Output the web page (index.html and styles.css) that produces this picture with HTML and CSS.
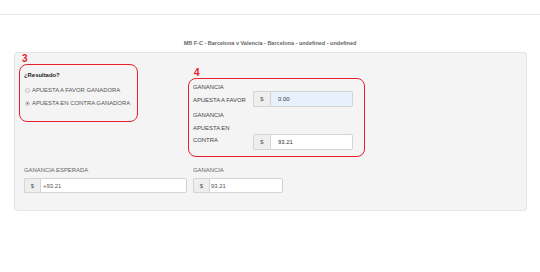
FILE: index.html
```html
<!DOCTYPE html>
<html lang="es">
<head>
    <meta charset="UTF-8">
    <meta name="viewport" content="width=device-width, initial-scale=1.0">
    <title>Apuesta</title>
    <link rel="stylesheet" href="styles.css">
</head>
<body>

    <header class="topbar"></header>

    <h2 class="title">MB F-C - Barcelona v Valencia - Barcelona - undefined - undefined</h2>

    <section class="panel">
        <div class="row-top">
            <div class="col-left">
                <div class="tag">3</div>
                <div class="box box-result">
                    <p class="question">¿Resultado?</p>
                    <label class="radio"><input type="radio" name="res"> APUESTA A FAVOR GANADORA</label>
                    <label class="radio"><input type="radio" name="res" checked> APUESTA EN CONTRA GANADORA</label>
                </div>
            </div>
            <div class="col-right">
                <div class="tag tag-4">4</div>
                <div class="box box-gain">
                    <div class="gain-row">
                        <span class="gain-label">GANANCIA<br>APUESTA A FAVOR</span>
                        <div class="group group-box">
                            <span class="addon">$</span>
                            <input class="field field-fill" type="text" value="0.00">
                        </div>
                    </div>
                    <div class="gain-row gain-row-2">
                        <span class="gain-label">GANANCIA<br>APUESTA EN<br>CONTRA</span>
                        <div class="group group-box">
                            <span class="addon">$</span>
                            <input class="field" type="text" value="93.21">
                        </div>
                    </div>
                </div>
            </div>
        </div>

        <div class="row-bottom">
            <div class="summary summary-left">
                <div class="sum-label">GANANCIA ESPERADA</div>
                <div class="group group-sum">
                    <span class="addon">$</span>
                    <input class="field field-sum" type="text" value="+93.21">
                </div>
            </div>
            <div class="summary summary-right">
                <div class="sum-label">GANANCIA</div>
                <div class="group group-sum">
                    <span class="addon">$</span>
                    <input class="field field-sum field-tight" type="text" value="93.21">
                </div>
            </div>
        </div>
    </section>

</body>
</html>
```

FILE: styles.css
```css
body {
    font-family: "Liberation Sans", Arial, sans-serif;
    margin: 0;
    padding: 0;
    background-color: #fff;
    color: #444;
}

.topbar {
    height: 14px;
    border-bottom: 1px solid #e8e8e8;
}

.title {
    margin: 24px 0 0 0;
    font-size: 5.5px;
    font-weight: bold;
    line-height: 8px;
    color: #666;
    text-align: center;
}

.panel {
    margin: 5px 13px 0 14px;
    height: 159px;
    box-sizing: border-box;
    padding: 0 4px;
    background-color: #f4f4f4;
    border: 1px solid #e4e4e4;
    border-radius: 3px;
}

.row-top {
    display: flex;
}

.col-left {
    width: 169px;
}

.tag {
    color: #e8202a;
    font-size: 10px;
    font-weight: bold;
    line-height: 11px;
    padding-left: 3px;
}

.tag-4 {
    margin-top: 14px;
    padding-left: 6px;
}

.box {
    border: 1.5px solid #e8202a;
    border-radius: 8px;
    box-sizing: border-box;
}

.box-result {
    width: 119px;
    height: 58px;
    padding: 6px 0 0 4px;
}

.question {
    margin: 0 0 7px 0;
    font-size: 5.9px;
    font-weight: bold;
    line-height: 8px;
    color: #222;
}

.radio {
    display: flex;
    align-items: center;
    gap: 2px;
    font-size: 5.9px;
    line-height: 8px;
    color: #555;
    margin-bottom: 5px;
}

.radio input {
    appearance: none;
    width: 5px;
    height: 5px;
    margin: 0 0 0 1px;
    border: 1px solid #c4c4c4;
    border-radius: 50%;
    background-color: #f0f0f0;
    box-sizing: border-box;
}

.radio input:checked {
    background: radial-gradient(circle, #666 40%, #e8e8e8 50%);
}

.box-gain {
    width: 177px;
    height: 79px;
    padding: 2px 0 0 4px;
}

.gain-row {
    display: flex;
    align-items: flex-end;
}

.gain-row-2 {
    margin-top: 2px;
}

.gain-label {
    width: 60px;
    font-size: 5.9px;
    line-height: 13px;
    color: #444;
}

.gain-row-2 .gain-label {
    line-height: 12.5px;
    padding-bottom: 1px;
}

.group {
    display: flex;
    height: 16px;
}

.group-box {
    width: 100px;
    margin-bottom: 0;
}

.gain-row-2 .group-box {
    margin-bottom: -2px;
}

.addon {
    width: 17px;
    flex: none;
    box-sizing: border-box;
    display: flex;
    align-items: center;
    justify-content: center;
    background-color: #eee;
    border: 1px solid #d4d4d4;
    border-right: none;
    border-radius: 2px 0 0 2px;
    font-size: 5.9px;
    color: #555;
}

.field {
    flex: 1;
    min-width: 0;
    box-sizing: border-box;
    height: 100%;
    margin: 0;
    padding: 0 0 0 7px;
    border: 1px solid #d4d4d4;
    border-radius: 0 2px 2px 0;
    background-color: #fff;
    font-family: inherit;
    font-size: 5.9px;
    color: #333;
    outline: none;
}

.field-fill {
    background-color: #e8f0fe;
}

.row-bottom {
    display: flex;
    margin-top: 9px;
    padding-left: 5px;
}

.summary-left {
    width: 169px;
}

.sum-label {
    font-size: 5.9px;
    line-height: 8px;
    color: #666;
    margin-bottom: 4px;
}

.group-sum {
    height: 15px;
}

.summary-left .group-sum {
    width: 163px;
}

.summary-right .group-sum {
    width: 90px;
}

.group-sum .addon {
    width: 16px;
}

.field-sum {
    padding-left: 2px;
    color: #555;
}

.field-tight {
    padding-left: 1px;
}
```
